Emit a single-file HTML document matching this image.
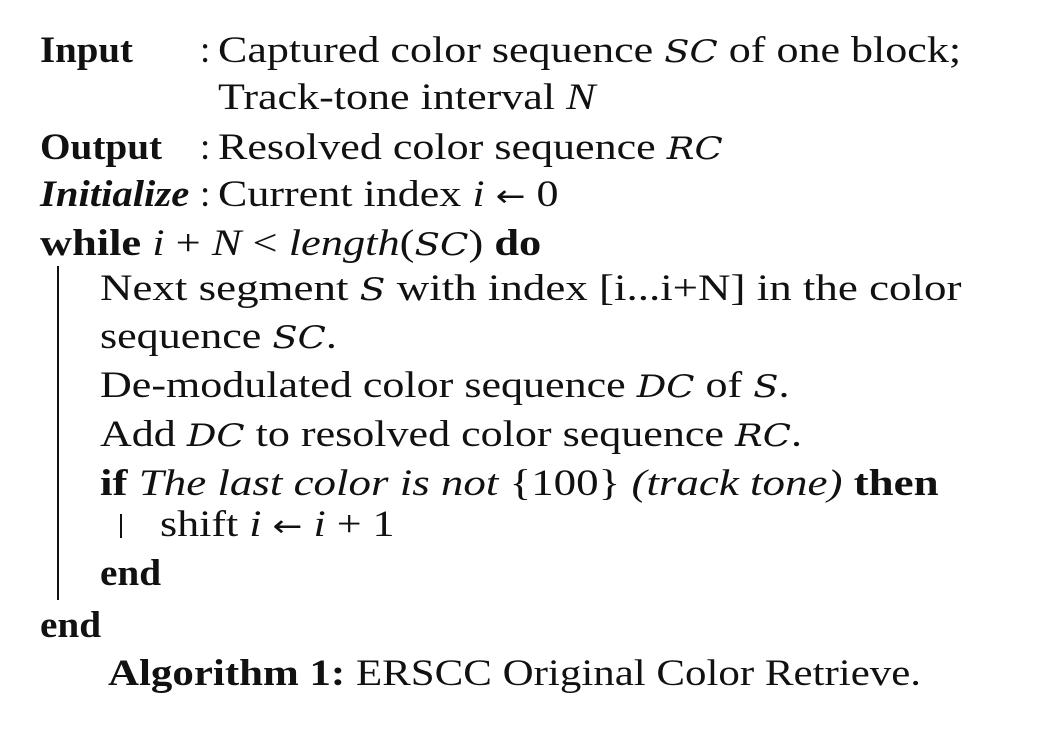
<!DOCTYPE html>
<html><head><meta charset="utf-8"><style>
body{margin:0;width:1056px;height:740px;background:#fff;position:relative;overflow:hidden;font-family:"Liberation Serif",serif;font-size:37px;color:#111}
.l{position:absolute;line-height:1;white-space:nowrap;transform-origin:0 0}
.s{transform:scaleX(1.19)}
b{font-weight:bold}
i{font-style:italic}
.c{font-style:italic;font-family:"DejaVu Serif",serif;font-size:31px}
.a{font-family:"DejaVu Sans",sans-serif;font-size:30px}
.bar{position:absolute;background:#111;width:2px}
</style></head><body>
<div class="l" style="left:40px;top:32px;transform:scaleX(1.05)"><b>Input</b></div>
<div class="l" style="left:200px;top:32px">:</div>
<div class="l s" style="left:218px;top:32px">Captured color sequence <span class="c">SC</span> of one block;</div>
<div class="l s" style="left:218px;top:79px">Track-tone interval <i>N</i></div>
<div class="l" style="left:40px;top:129px;transform:scaleX(1.06)"><b>Output</b></div>
<div class="l" style="left:200px;top:129px">:</div>
<div class="l s" style="left:218px;top:129px">Resolved color sequence <span class="c">RC</span></div>
<div class="l" style="left:40px;top:176px;transform:scaleX(1.1)"><b><i>Initialize</i></b></div>
<div class="l" style="left:200px;top:176px">:</div>
<div class="l s" style="left:218px;top:176px">Current index <i>i</i> <span class="a">←</span> 0</div>
<div class="l" style="left:40px;top:225px;transform:scaleX(1.2)"><b>while</b> <i>i</i> + <i>N</i> &lt; <i>length</i>(<span class="c">SC</span>) <b>do</b></div>
<div class="bar" style="left:57px;top:266px;height:334px"></div>
<div class="l" style="left:100px;top:270px;transform:scaleX(1.215)">Next segment <span class="c">S</span> with index [i...i+N] in the color</div>
<div class="l s" style="left:100px;top:318px">sequence <span class="c">SC</span>.</div>
<div class="l s" style="left:100px;top:367px">De-modulated color sequence <span class="c">DC</span> of <span class="c">S</span>.</div>
<div class="l s" style="left:100px;top:416px">Add <span class="c">DC</span> to resolved color sequence <span class="c">RC</span>.</div>
<div class="l" style="left:100px;top:465px;transform:scaleX(1.215)"><b>if</b> <i>The last color is not</i> {100} <i>(track tone)</i> <b>then</b></div>
<div class="bar" style="left:120px;top:514px;height:24px"></div>
<div class="l s" style="left:160px;top:506px">shift <i>i</i> <span class="a">←</span> <i>i</i> + 1</div>
<div class="l" style="left:100px;top:555px;transform:scaleX(1.06)"><b>end</b></div>
<div class="l" style="left:40px;top:607px;transform:scaleX(1.06)"><b>end</b></div>
<div class="l" style="left:108px;top:655px;transform:scaleX(1.16)"><b>Algorithm 1:</b> ERSCC Original Color Retrieve.</div>
</body></html>
